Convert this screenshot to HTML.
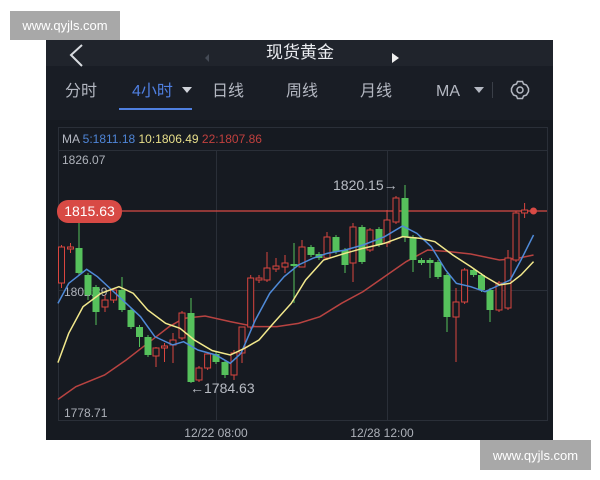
<!DOCTYPE html>
<html><head><meta charset="utf-8"><style>
body{margin:0;width:600px;height:480px;background:#fff;position:relative;overflow:hidden;font-family:"Liberation Sans","Noto Sans CJK SC",sans-serif}
.wm{position:absolute;background:#a8a8a8;color:#fff;font-size:13px;display:flex;align-items:center;justify-content:center}
</style></head><body>
<div class="wm" style="left:10px;top:11px;width:110px;height:29px">www.qyjls.com</div>
<svg style="position:absolute;left:0;top:0" width="600" height="480" font-family="Liberation Sans, Noto Sans CJK SC, sans-serif">
<rect x="46" y="40" width="507" height="400" fill="#161a21"/>
<rect x="46" y="40" width="507" height="26" fill="#20242c"/>
<rect x="46" y="66" width="507" height="54" fill="#191d25"/>
<path d="M82 45 L71 55 L82 66" stroke="#d8dbe0" stroke-width="2" fill="none"/>
<text x="300" y="58" fill="#eceef2" font-size="17" text-anchor="middle">现货黄金</text>
<path d="M209 54 L205 58 L209 62Z" fill="#444a55"/>
<path d="M392 53 L399 58 L392 63Z" fill="#f0f0f0"/>
<g font-size="16" fill="#b4b8c2">
<text x="65" y="96">分时</text>
<text x="132" y="96" fill="#4f7fe0">4小时</text>
<path d="M182 87 L192 87 L187 93Z" fill="#d0d3da"/>
<text x="212" y="96">日线</text>
<text x="286" y="96">周线</text>
<text x="360" y="96">月线</text>
<text x="436" y="96">MA</text>
</g>
<path d="M474 87 L484 87 L479 93Z" fill="#b4b8c2"/>
<rect x="492" y="82" width="1" height="16" fill="#3a3f48"/>
<g transform="translate(520,90)" stroke="#b4b8c2" stroke-width="1.5" fill="none">
<circle r="3"/>
<path d="M-2.5 -8.5 L2.5 -8.5 L3.5 -6 L6.5 -5 L8.5 -1.5 L8.5 1.5 L6.5 5 L3.5 6 L2.5 8.5 L-2.5 8.5 L-3.5 6 L-6.5 5 L-8.5 1.5 L-8.5 -1.5 L-6.5 -5 L-3.5 -6Z"/>
</g>
<rect x="119" y="108" width="73" height="2" fill="#4f7fe0"/>
<g stroke="#2a2f38" stroke-width="1" fill="none">
<rect x="58.5" y="127.5" width="489" height="293"/>
<line x1="58" y1="150.5" x2="548" y2="150.5"/>
<line x1="58" y1="290.5" x2="548" y2="290.5"/>
<line x1="216.5" y1="150" x2="216.5" y2="421"/>
<line x1="387.5" y1="150" x2="387.5" y2="421"/>
</g>
<text x="62" y="143" font-size="12"><tspan fill="#b4b8c2">MA </tspan><tspan fill="#4f86d8">5:1811.18 </tspan><tspan fill="#e8df8a"> 10:1806.49 </tspan><tspan fill="#c0403e"> 22:1807.86</tspan></text>
<g font-size="12" fill="#aeb2ba">
<text x="62" y="164">1826.07</text>
<text x="64" y="296">1802.39</text>
<text x="64" y="417">1778.71</text>
<text x="216" y="437" text-anchor="middle">12/22 08:00</text>
<text x="382" y="437" text-anchor="middle">12/28 12:00</text>
</g>
<g font-size="14" fill="#b8bcc4">
<text x="333" y="190">1820.15→</text>
<text x="190" y="393">←1784.63</text>
</g>
<g id="c" stroke-width="1"></g>
<g transform="translate(40,180) scale(0.35894,0.33333)" fill="none" stroke-width="1.5">
<polyline vector-effect="non-scaling-stroke" stroke="#b84341" points="50,658 100,620 180,585 240,540 300,490 360,440 400,415 460,408 530,425 600,440 660,440 720,430 780,410 840,370 900,335 960,290 1020,245 1080,210 1140,215 1200,222 1280,240 1330,235 1375,225"/>
</g>
<line x1="122" y1="211" x2="547" y2="211" stroke="#d84a45" stroke-width="1.2"/>
<rect x="57" y="200" width="65" height="23" rx="11" fill="#d84a45"/>
<text x="89.5" y="216" font-size="14" fill="#fff" text-anchor="middle">1815.63</text>
<g stroke-width="1">
<script></script>
</g>
<g id="cand"></g>
<g transform="translate(40,180) scale(0.35894,0.33333)" fill="none" stroke-width="1.5">
<polyline vector-effect="non-scaling-stroke" stroke="#4f8ad8" points="50,370 80,310 130,268 160,290 200,330 240,370 280,410 320,470 370,495 400,485 440,510 490,525 530,550 560,520 600,420 640,340 680,290 720,255 760,235 800,220 850,210 900,195 960,170 1010,138 1050,160 1090,200 1130,270 1160,310 1200,320 1240,335 1280,315 1310,300 1340,240 1375,165"/>
<polyline vector-effect="non-scaling-stroke" stroke="#f2e88c" points="50,548 80,460 120,380 170,340 220,320 260,340 300,390 350,430 390,445 430,480 480,512 530,525 570,505 610,480 650,430 700,370 740,300 790,240 850,220 900,205 960,190 1010,170 1060,175 1100,185 1150,225 1200,260 1240,290 1280,315 1310,310 1340,285 1375,245"/>
</g>
<circle cx="533.5" cy="211" r="3.5" fill="#d84a45"/>
</svg>
<div class="wm" style="left:480px;top:440px;width:111px;height:30px">www.qyjls.com</div>
<script>
var d=[[61.5,247,283,245,288,1],[70.5,247,249,243,253,1],[79,248,273,223,275,0],[88,275,295,273,300,0],[96,287,312,285,325,0],[105,300,307,295,312,1],[113.6,290,300,288,303,1],[122,290,310,277,312,0],[131,310,327,308,329,0],[139.5,327,337,325,347,0],[148,337,355,335,357,0],[156,348,356,347,367,1],[164.5,346,348,343,362,1],[173,340,345,333,363,1],[182,313,338,311,340,1],[191,313,382,298,383,0],[199,368,380,366,382,1],[207.6,354,368,352,370,1],[216,354,362,352,364,0],[225,362,375,360,378,0],[234,353,375,350,380,1],[242,327,353,327,363,1],[250.7,278,327,275,329,1],[259,278,280,275,283,1],[267,268,280,252,282,1],[276,266,269,258,272,1],[285,263,267,255,273,1],[294,264,266,243,303,0],[302,247,267,240,267,1],[311,247,255,245,257,0],[319,254,258,252,260,0],[327,237,258,232,260,1],[336,237,252,235,254,0],[345,250,265,248,273,0],[353,227,263,223,282,1],[362,227,262,225,264,0],[370,230,250,228,252,1],[379,229,245,227,247,0],[387,220,243,210,247,1],[396,198,222,196,224,1],[405,198,237,185,242,0],[413,237,260,235,272,0],[421.5,260,263,258,265,0],[430,260,263,258,278,0],[438,262,277,260,279,0],[447,275,317,273,332,0],[456,302,317,288,362,1],[464.6,270,302,268,304,1],[473.6,270,275,268,277,0],[481.5,275,290,273,292,0],[490,290,310,288,322,0],[499,283,310,281,312,1],[508,258,308,250,310,1],[516,213,260,211,262,1],[524.6,210,213,203,218,1]];
var s='';d.forEach(function(c){var col=c[5]?'#d9453f':'#56c15c';s+='<line x1="'+c[0]+'" x2="'+c[0]+'" y1="'+c[3]+'" y2="'+c[4]+'" stroke="'+col+'"/>';
if(c[5])s+='<rect x="'+(c[0]-3)+'" y="'+c[1]+'" width="6" height="'+Math.max(c[2]-c[1],1)+'" fill="#161a21" stroke="'+col+'"/>';else s+='<rect x="'+(c[0]-3.5)+'" y="'+c[1]+'" width="7" height="'+Math.max(c[2]-c[1],1)+'" fill="'+col+'"/>';});
document.getElementById('cand').innerHTML=s;
</script>
</body></html>
